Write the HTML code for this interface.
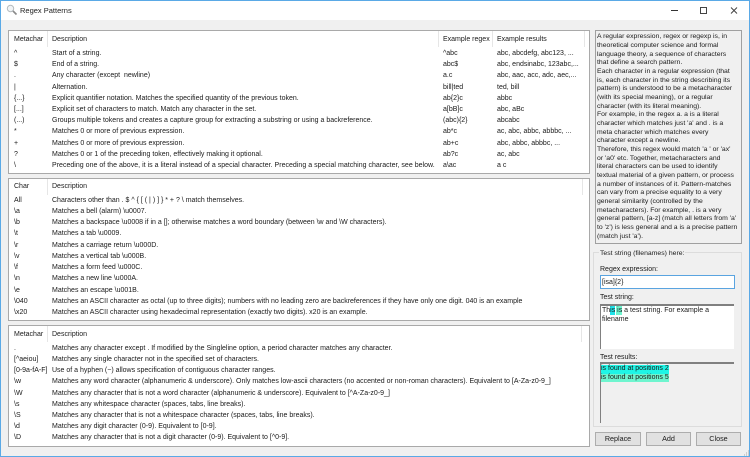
<!DOCTYPE html>
<html><head><meta charset="utf-8"><title>Regex Patterns</title>
<style>
html,body{margin:0;padding:0;width:750px;height:457px;overflow:hidden;background:#f0f0f0}
body{font-family:"Liberation Sans",sans-serif;font-size:7px;color:#1a1a1a;position:relative}
#w{position:absolute;left:0;top:0;width:750px;height:457px;filter:blur(.35px)}
.a{position:absolute;white-space:pre;line-height:11px}
.p{position:absolute;background:#fff;border:1px solid #a9a9a9;box-sizing:border-box}
.r{position:absolute;left:0;width:590px;height:11px}
.r span{position:absolute;top:0;white-space:pre;line-height:11px}
.c1{left:14px}.c2{left:52px}.c3{left:443px}.c4{left:497px}
.sep{position:absolute;width:1px;background:#e6e6e6}
.bx{position:absolute;background:#fff;box-sizing:border-box}
.btn{position:absolute;top:432px;height:14px;background:#e1e1e1;border:1px solid #adadad;box-sizing:border-box;text-align:center;line-height:12px;font-size:7.2px}
#info div{position:absolute;left:597px;white-space:pre;line-height:9px;font-size:6.85px}
</style></head><body><div id="w">
<div style="position:absolute;left:0;top:0;width:750px;height:1px;background:#5aa9e6"></div>
<div style="position:absolute;left:0;top:1px;width:750px;height:19px;background:#fff"></div>
<div style="position:absolute;left:0;top:0;width:1px;height:457px;background:#5aa9e6"></div>
<div style="position:absolute;right:0;top:0;width:1px;height:457px;background:#5aa9e6"></div>
<div style="position:absolute;left:0;top:456px;width:750px;height:1px;background:#5aa9e6"></div>
<svg style="position:absolute;left:6px;top:4px" width="12" height="12" viewBox="0 0 12 12"><circle cx="4.5" cy="4.5" r="3.2" fill="#f1f4f6" stroke="#b5bbbf" stroke-width="1"/><path d="M7 7l3.500 3.500" stroke="#8a8a8a" stroke-width="1.6"/></svg>
<div class="a" style="left:20px;top:5px;font-size:7.5px;color:#222">Regex Patterns</div>
<svg style="position:absolute;left:670px;top:1px" width="78" height="19" viewBox="0 0 78 19"><path d="M1 9.500h7" stroke="#333" fill="none"/><path d="M30.500 6.500h6v6h-6z" stroke="#444" fill="none"/><path d="M61 6.500l6 6M67 6.500l-6 6" stroke="#444" fill="none"/></svg>

<div class="p" style="left:8px;top:30px;width:582px;height:144px"></div>
<div class="sep" style="left:47px;top:31px;height:16px"></div>
<div class="sep" style="left:438px;top:31px;height:16px"></div>
<div class="sep" style="left:492px;top:31px;height:16px"></div>
<div class="sep" style="left:584px;top:31px;height:16px"></div>
<div class="r" style="top:34px"><span class="c1">Metachar</span><span class="c2">Description</span><span class="c3">Example regex</span><span class="c4">Example results</span></div>
<div class="r" style="top:48px"><span class="c1">^</span><span class="c2">Start of a string.</span><span class="c3">^abc</span><span class="c4">abc, abcdefg, abc123, ...</span></div>
<div class="r" style="top:59px"><span class="c1">$</span><span class="c2">End of a string.</span><span class="c3">abc$</span><span class="c4">abc, endsinabc, 123abc,...</span></div>
<div class="r" style="top:70px"><span class="c1">.</span><span class="c2">Any character (except  newline)</span><span class="c3">a.c</span><span class="c4">abc, aac, acc, adc, aec,...</span></div>
<div class="r" style="top:82px"><span class="c1">|</span><span class="c2">Alternation.</span><span class="c3">bill|ted</span><span class="c4">ted, bill</span></div>
<div class="r" style="top:93px"><span class="c1">{...}</span><span class="c2">Explicit quantifier notation. Matches the specified quantity of the previous token.</span><span class="c3">ab{2}c</span><span class="c4">abbc</span></div>
<div class="r" style="top:104px"><span class="c1">[...]</span><span class="c2">Explicit set of characters to match. Match any character in the set.</span><span class="c3">a[bB]c</span><span class="c4">abc, aBc</span></div>
<div class="r" style="top:115px"><span class="c1">(...)</span><span class="c2">Groups multiple tokens and creates a capture group for extracting a substring or using a backreference.</span><span class="c3">(abc){2}</span><span class="c4">abcabc</span></div>
<div class="r" style="top:126px"><span class="c1">*</span><span class="c2">Matches 0 or more of previous expression.</span><span class="c3">ab*c</span><span class="c4">ac, abc, abbc, abbbc, ...</span></div>
<div class="r" style="top:138px"><span class="c1">+</span><span class="c2">Matches 0 or more of previous expression.</span><span class="c3">ab+c</span><span class="c4">abc, abbc, abbbc, ...</span></div>
<div class="r" style="top:149px"><span class="c1">?</span><span class="c2">Matches 0 or 1 of the preceding token, effectively making it optional.</span><span class="c3">ab?c</span><span class="c4">ac, abc</span></div>
<div class="r" style="top:160px"><span class="c1">\</span><span class="c2" style="letter-spacing:.02px">Preceding one of the above, it is a literal instead of a special character. Preceding a special matching character, see below.</span><span class="c3">a\ac</span><span class="c4">a c</span></div>

<div class="p" style="left:8px;top:178px;width:582px;height:143px"></div>
<div class="sep" style="left:47px;top:179px;height:16px"></div>
<div class="sep" style="left:582px;top:179px;height:16px"></div>
<div class="r" style="top:181px"><span class="c1">Char</span><span class="c2">Description</span></div>
<div class="r" style="top:195px"><span class="c1">All</span><span class="c2">Characters other than . $ ^ { [ ( | ) ] } * + ? \ match themselves.</span></div>
<div class="r" style="top:206px"><span class="c1">\a</span><span class="c2">Matches a bell (alarm) \u0007.</span></div>
<div class="r" style="top:217px"><span class="c1">\b</span><span class="c2">Matches a backspace \u0008 if in a []; otherwise matches a word boundary (between \w and \W characters).</span></div>
<div class="r" style="top:228px"><span class="c1">\t</span><span class="c2">Matches a tab \u0009.</span></div>
<div class="r" style="top:240px"><span class="c1">\r</span><span class="c2">Matches a carriage return \u000D.</span></div>
<div class="r" style="top:251px"><span class="c1">\v</span><span class="c2">Matches a vertical tab \u000B.</span></div>
<div class="r" style="top:262px"><span class="c1">\f</span><span class="c2">Matches a form feed \u000C.</span></div>
<div class="r" style="top:273px"><span class="c1">\n</span><span class="c2">Matches a new line \u000A.</span></div>
<div class="r" style="top:285px"><span class="c1">\e</span><span class="c2">Matches an escape \u001B.</span></div>
<div class="r" style="top:296px"><span class="c1">\040</span><span class="c2">Matches an ASCII character as octal (up to three digits); numbers with no leading zero are backreferences if they have only one digit. 040 is an example</span></div>
<div class="r" style="top:307px"><span class="c1">\x20</span><span class="c2">Matches an ASCII character using hexadecimal representation (exactly two digits). x20 is an example.</span></div>

<div class="p" style="left:8px;top:325px;width:582px;height:122px"></div>
<div class="sep" style="left:47px;top:326px;height:16px"></div>
<div class="sep" style="left:581px;top:326px;height:16px"></div>
<div class="r" style="top:329px"><span class="c1">Metachar</span><span class="c2">Description</span></div>
<div class="r" style="top:343px"><span class="c1">.</span><span class="c2">Matches any character except . If modified by the Singleline option, a period character matches any character.</span></div>
<div class="r" style="top:354px"><span class="c1">[^aeiou]</span><span class="c2">Matches any single character not in the specified set of characters.</span></div>
<div class="r" style="top:365px"><span class="c1">[0-9a-fA-F]</span><span class="c2">Use of a hyphen (−) allows specification of contiguous character ranges.</span></div>
<div class="r" style="top:376px"><span class="c1">\w</span><span class="c2">Matches any word character (alphanumeric &amp; underscore). Only matches low-ascii characters (no accented or non-roman characters). Equivalent to [A-Za-z0-9_]</span></div>
<div class="r" style="top:388px"><span class="c1">\W</span><span class="c2">Matches any character that is not a word character (alphanumeric &amp; underscore). Equivalent to [^A-Za-z0-9_]</span></div>
<div class="r" style="top:399px"><span class="c1">\s</span><span class="c2">Matches any whitespace character (spaces, tabs, line breaks).</span></div>
<div class="r" style="top:410px"><span class="c1">\S</span><span class="c2">Matches any character that is not a whitespace character (spaces, tabs, line breaks).</span></div>
<div class="r" style="top:421px"><span class="c1">\d</span><span class="c2">Matches any digit character (0-9). Equivalent to [0-9].</span></div>
<div class="r" style="top:432px"><span class="c1">\D</span><span class="c2">Matches any character that is not a digit character (0-9). Equivalent to [^0-9].</span></div>

<div style="position:absolute;left:595px;top:30px;width:147px;height:214px;border:1px solid #a0a0a0;box-sizing:border-box;background:#f0f0f0"></div>
<div id="info">
<div style="top:32px">A regular expression, regex or regexp is, in</div>
<div style="top:41px">theoretical computer science and formal</div>
<div style="top:50px">language theory, a sequence of characters</div>
<div style="top:58px">that define a search pattern.</div>
<div style="top:67px">Each character in a regular expression (that</div>
<div style="top:76px">is, each character in the string describing its</div>
<div style="top:84px">pattern) is understood to be a metacharacter</div>
<div style="top:93px">(with its special meaning), or a regular</div>
<div style="top:102px">character (with its literal meaning).</div>
<div style="top:110px">For example, in the regex a. a is a literal</div>
<div style="top:119px">character which matches just 'a' and . is a</div>
<div style="top:128px">meta character which matches every</div>
<div style="top:136px">character except a newline.</div>
<div style="top:145px">Therefore, this regex would match 'a ' or 'ax'</div>
<div style="top:154px">or 'a0' etc. Together, metacharacters and</div>
<div style="top:162px">literal characters can be used to identify</div>
<div style="top:171px">textual material of a given pattern, or process</div>
<div style="top:180px">a number of instances of it. Pattern-matches</div>
<div style="top:188px">can vary from a precise equality to a very</div>
<div style="top:197px">general similarity (controlled by the</div>
<div style="top:206px">metacharacters). For example, . is a very</div>
<div style="top:214px">general pattern, [a-z] (match all letters from 'a'</div>
<div style="top:223px">to 'z') is less general and a is a precise pattern</div>
<div style="top:232px">(match just 'a').</div>
</div>

<div style="position:absolute;left:593px;top:252px;width:149px;height:175px;border:1px solid #dcdcdc;box-sizing:border-box"></div>
<div class="a" style="left:599px;top:248px;background:#f0f0f0;padding:0 1px;font-size:6.85px">Test string (filenames) here:</div>
<div class="a" style="left:600px;top:264px">Regex expression:</div>
<div class="bx" style="left:600px;top:275px;width:135px;height:14px;border:1px solid #5aa4e0"></div>
<div class="a" style="left:602px;top:277px">[isa]{2}</div>
<div class="a" style="left:600px;top:292px">Test string:</div>
<div class="bx" style="left:600px;top:304px;width:134px;height:45px;border-top:2px solid #808080;border-left:1px solid #808080"></div>
<div style="position:absolute;left:610px;top:306px;width:5px;height:9px;background:#1fe3ea"></div>
<div style="position:absolute;left:616px;top:306px;width:6px;height:9px;background:#6ff5cf"></div>
<div class="a" style="left:602px;top:305.500px;line-height:9px">This is a test string. For example a
filename</div>
<div class="a" style="left:600px;top:352px">Test results:</div>
<div class="bx" style="left:600px;top:362px;width:134px;height:61px;background:#f0f0f0;border-top:2px solid #808080;border-left:1px solid #808080"></div>
<div style="position:absolute;left:601px;top:365px;width:68px;height:8.500px;background:#1ff5e6"></div>
<div style="position:absolute;left:601px;top:373.500px;width:68px;height:8.500px;background:#6ff5cf"></div>
<div class="a" style="left:601px;top:365px;line-height:8.700px">is found at positions 2
is found at positions 5</div>

<div class="btn" style="left:595px;width:46px">Replace</div>
<div class="btn" style="left:646px;width:45px">Add</div>
<div class="btn" style="left:696px;width:45px">Close</div>
<svg style="position:absolute;left:744px;top:450px" width="6" height="6"><path d="M4 1h1M2 3h1M4 3h1M0 5h1M2 5h1M4 5h1" stroke="#aaa" fill="none"/></svg>
</div></body></html>
